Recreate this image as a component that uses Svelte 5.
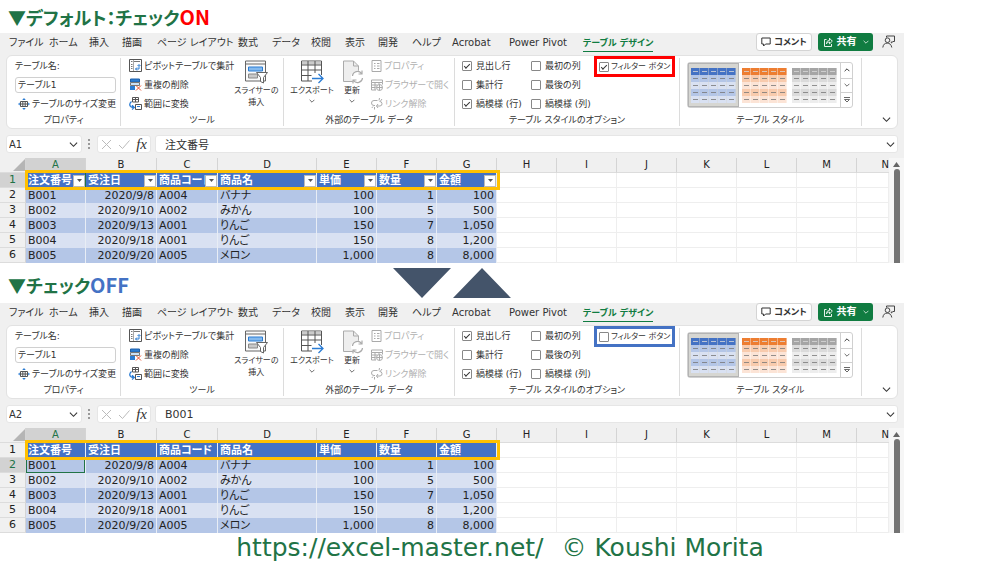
<script lang="ts">
  interface Book {
    id: string;
    title: string;
    state: string;
    tone: string;
    filter: boolean;
    cell: string;
    formula: string;
    activeRow: number;
  }

  const books: Book[] = $state([
    { id: 'on', title: '▼デフォルト：チェック', state: 'ON', tone: 'red', filter: true, cell: 'A1', formula: '注文番号', activeRow: 1 },
    { id: 'off', title: '▼チェック', state: 'OFF', tone: 'blue', filter: false, cell: 'A2', formula: 'B001', activeRow: 2 },
  ]);

  const tabs = [
    'ファイル', 'ホーム', '挿入', '描画', 'ページ レイアウト', '数式', 'データ',
    '校閲', '表示', '開発', 'ヘルプ', 'Acrobat', 'Power Pivot', 'テーブル デザイン',
  ];

  const options = [
    { label: '見出し行', checked: true },
    { label: '最初の列', checked: false },
    { label: '集計行', checked: false },
    { label: '最後の列', checked: false },
    { label: '縞模様 (行)', checked: true },
    { label: '縞模様 (列)', checked: false },
  ];

  const styles = [
    { name: '青', head: '#4472c4', dark: '#b4c6e7', light: '#d9e1f2' },
    { name: 'オレンジ', head: '#ed7d31', dark: '#f8cbad', light: '#fce4d6' },
    { name: '灰色', head: '#a5a5a5', dark: '#dbdbdb', light: '#ededed' },
  ];

  const letters = ['A', 'B', 'C', 'D', 'E', 'F', 'G', 'H', 'I', 'J', 'K', 'L', 'M', 'N'];
  const blanks = letters.slice(7);
  const headings = ['注文番号', '受注日', '商品コード', '商品名', '単価', '数量', '金額'];
  const rows = [
    ['B001', '2020/9/8', 'A004', 'バナナ', '100', '1', '100'],
    ['B002', '2020/9/10', 'A002', 'みかん', '100', '5', '500'],
    ['B003', '2020/9/13', 'A001', 'りんご', '150', '7', '1,050'],
    ['B004', '2020/9/18', 'A001', 'りんご', '150', '8', '1,200'],
    ['B005', '2020/9/20', 'A005', 'メロン', '1,000', '8', '8,000'],
  ];
  const numeric = [1, 4, 5, 6];
</script>

{#snippet chevron(size: number)}
  <svg width={size} height={size} viewBox="0 0 10 10" fill="none" stroke="currentColor" stroke-width="1.2" aria-hidden="true">
    <path d="M1 3l4 4 4-4" />
  </svg>
{/snippet}

<main class="page">
  {#each books as book, i}
    <header class="heading" class:second={i === 1}>
      <h2>{book.title}<span class={book.tone}>{book.state}</span></h2>
      {#if i === 1}
        <svg class="arrows" width="118" height="30" viewBox="0 0 118 30" aria-hidden="true">
          <path d="M0 0h58L29 30zM60 30h58L89 0z" fill="#44546a" />
        </svg>
      {/if}
    </header>

    <section class="book">
      <div class="tabbar">
        <nav class="tabs">
          {#each tabs as tab, t}
            <a href="#{book.id}" class:active={t === tabs.length - 1}>{tab}</a>
          {/each}
        </nav>
        <button class="comment">
          <svg width="10" height="10" viewBox="0 0 10 10" fill="none" stroke="#333" aria-hidden="true">
            <path d="M.8 1h8.4v6H4.6L2.6 9V7H.8z" />
          </svg>
          コメント
        </button>
        <button class="share">
          <svg width="10" height="10" viewBox="0 0 10 10" fill="none" stroke="#fff" aria-hidden="true">
            <path d="M3.5 2.5h-2v7h7V7M3.5 6.8c0-2.2 1-3.4 3-3.4V1.2l2.8 3-2.8 2.6V5C5 5 4 5.6 3.5 6.8z" stroke-width=".9" />
          </svg>
          共有
          <span class="split">{@render chevron(6)}</span>
        </button>
        <button class="person" aria-label="ユーザー">
          <svg width="13" height="13" viewBox="0 0 13 13" fill="none" stroke="#444" aria-hidden="true">
            <path d="M4.5 2.5V1h8v5.500h-1.500L9.300 8V6.500" />
            <circle cx="5.500" cy="5.200" r="2.300" />
            <path d="M.8 12.500c.4-3 2-4.400 4.400-4.400s4 1.400 4.600 4.400" />
          </svg>
        </button>
      </div>

      <div class="ribbon">
        <div class="group props">
          <div class="body stack">
            <label for="name-{book.id}">テーブル名:</label>
            <input id="name-{book.id}" class="name" type="text" value="テーブル1" />
            <button class="tool resize">
              <svg width="12" height="12" viewBox="0 0 12 12" fill="none" aria-hidden="true">
                <path d="M2.500 3.500h7v5h-7zM2.500 6h7M4.800 3.500v5M7.200 3.500v5" stroke="#555" />
                <path d="M6 0l1.800 2H4.200zM6 12l1.800-2H4.200zM0 6l1.800-1.500v3zM12 6l-1.800-1.500v3z" fill="#2b7cd3" />
              </svg>
              テーブルのサイズ変更
            </button>
          </div>
          <p>プロパティ</p>
        </div>

        <div class="group tools">
          <div class="body">
            <div class="stack">
              <button class="tool">
                <svg width="13" height="13" viewBox="0 0 13 13" fill="none" aria-hidden="true">
                  <path d="M.5 .5h12v12H.5z" stroke="#555" />
                  <path d="M2 2.500h1.500M2 5.500h1.500M2 7.500h1.500M2 9.500h1.500M5 2.500h6" stroke="#777" />
                  <path d="M4.500 1v11" stroke="#aaa" />
                  <path d="M6.500 10h3.500V6M8 8.500L6.500 10 8 11.500M8.500 7L10 5.500 11.500 7" stroke="#2b7cd3" />
                </svg>
                ピボットテーブルで集計
              </button>
              <button class="tool">
                <svg width="13" height="13" viewBox="0 0 13 13" fill="none" aria-hidden="true">
                  <path d="M1.500 1h9v3h-9z" fill="#2b7cd3" stroke="#1e5fa8" />
                  <path d="M1.500 4.500h9v3h-9z" fill="#c9e0f7" stroke="#777" />
                  <path d="M1 8h5v4H1z" fill="#2b7cd3" />
                  <path d="M7 7.500l5 5M12 7.500l-5 5" stroke="#e8502e" />
                </svg>
                重複の削除
              </button>
              <button class="tool">
                <svg width="13" height="13" viewBox="0 0 13 13" fill="none" aria-hidden="true">
                  <path d="M3.500 .5h6v4.500h-6zM3.500 2.500h6M6.500 .5v4.500M6.500 7.500h6v5h-6z" stroke="#555" />
                  <path d="M8 9.500h3" stroke="#2b7cd3" />
                  <path d="M2.500 4.500C-.5 7 .5 10.500 5 10.500M3 8.200L5.300 10.500 3 12.500" stroke="#2b7cd3" stroke-width="1.300" />
                </svg>
                範囲に変換
              </button>
            </div>
            <button class="big slicer">
              <svg width="24" height="24" viewBox="0 0 24 24" fill="none" aria-hidden="true">
                <path d="M1.500 1h20v20h-20z" fill="#fafafa" stroke="#666" />
                <path d="M2 4h19" stroke="#666" />
                <path d="M4.500 7h14v4h-14z" fill="#83b9ee" stroke="#2b7cd3" />
                <path d="M4.500 14h9v4h-9z" fill="#c8c8c8" stroke="#888" />
                <path d="M12.500 12.500h11l-4 5V23l-3-1.500v-4z" fill="#fff" stroke="#666" />
              </svg>
              <span>スライサーの<br />挿入</span>
            </button>
          </div>
          <p>ツール</p>
        </div>

        <div class="group external">
          <div class="body">
            <button class="big export">
              <svg width="24" height="24" viewBox="0 0 24 24" fill="none" aria-hidden="true">
                <path d="M1.500 1h20v20h-20z" fill="#fff" stroke="#555" />
                <path d="M2 1.500h19v3H2z" fill="#ccc" />
                <path d="M1.500 5h20M1.500 10h20M1.500 15.500h10M8 1v20M15 1v12" stroke="#555" />
                <path d="M12 15h12v8H12z" fill="#fff" />
                <path d="M12 18.500h11M18.500 14l4.500 4.500-4.500 4.500" stroke="#2b7cd3" stroke-width="1.300" />
              </svg>
              <span>エクスポート</span>
              {@render chevron(6)}
            </button>
            <button class="big refresh">
              <svg width="24" height="24" viewBox="0 0 24 24" fill="none" aria-hidden="true">
                <path d="M3.500 1h10l5 5v15.500h-15z" fill="#eee" stroke="#aaa" />
                <path d="M13.500 1v5h5" stroke="#aaa" />
                <circle cx="17.500" cy="17" r="6.500" fill="#fff" />
                <path d="M12.500 16a5 5 0 0 1 9-2.500M22.500 18a5 5 0 0 1-9 2.500M22 10.500v3.500h-3.500M13 23.500V20h3.500" stroke="#aaa" stroke-width="1.200" />
              </svg>
              <span>更新</span>
              {@render chevron(6)}
            </button>
            <div class="stack">
              <button class="tool" disabled>
                <svg width="11" height="12" viewBox="0 0 11 12" fill="none" stroke="#aaa" aria-hidden="true">
                  <path d="M1 .5h9v11H1zM3 3.500h1.500M6 3.500h2.500M3 6h1.500M6 6h2.500M3 8.500h1.500M6 8.500h2.500" />
                </svg>
                プロパティ
              </button>
              <button class="tool" disabled>
                <svg width="12" height="12" viewBox="0 0 12 12" fill="none" stroke="#aaa" aria-hidden="true">
                  <path d="M.5 1h11v2.500H.5zM.5 3.500v7.500H5M.5 6h6M.5 8.500h4M4 3.500V11M8 3.500v2M11.500 3.500v2" />
                  <circle cx="8.500" cy="8.500" r="3" />
                  <path d="M5.500 8.500h6M8.500 5.500v6" />
                </svg>
                ブラウザーで開く
              </button>
              <button class="tool" disabled>
                <svg width="12" height="12" viewBox="0 0 12 12" fill="none" stroke="#aaa" aria-hidden="true">
                  <path d="M4 7.500H3a2.500 2.500 0 0 1 0-5h3.500M8.500 3.500a2.200 2.200 0 0 1 .5 4.500H5.500M8 2.500L8.500 0M9.500 3l1.500-2M7 6L5.500 8 7 10M3.500 9v2.500M2 8.500L.8 10" />
                </svg>
                リンク解除
              </button>
            </div>
          </div>
          <p>外部のテーブル データ</p>
        </div>

        <div class="group options">
          <div class="body">
            <div class="checks">
              {#each options as option}
                <label class="check"><input type="checkbox" checked={option.checked} />{option.label}</label>
              {/each}
            </div>
            <label class="check marked {book.tone}"><input type="checkbox" bind:checked={book.filter} />フィルター ボタン</label>
          </div>
          <p>テーブル スタイルのオプション</p>
        </div>

        <div class="group gallery-group">
          <div class="body">
            <div class="gallery">
              {#each styles as style, s}
                <button class="thumb" class:selected={s === 0} aria-label={style.name}>
                  <svg width="45" height="35" viewBox="0 0 45 35" aria-hidden="true">
                    {#each [0, 1, 2, 3, 4] as r}
                      {#each [0, 1, 2, 3, 4] as c}
                        <rect x={c * 9} y={r * 7} width="8.600" height="7" fill={r === 0 ? style.head : r % 2 ? style.dark : style.light} />
                        <path d="M{c * 9 + 2} {r * 7 + 3.5}h5" stroke={r === 0 ? '#d8d8d8' : '#777'} stroke-width=".8" />
                      {/each}
                    {/each}
                  </svg>
                </button>
              {/each}
              <div class="spin">
                <button aria-label="上へ"><svg width="6" height="6" viewBox="0 0 10 10" fill="none" stroke="#333" stroke-width="1.600"><path d="M1 7l4-4 4 4" /></svg></button>
                <button aria-label="下へ">{@render chevron(6)}</button>
                <button aria-label="その他"><svg width="8" height="8" viewBox="0 0 8 8" fill="none" stroke="#444"><path d="M1 1.500h6M1.500 3.500h5L4 6z" stroke-width=".8" /></svg></button>
              </div>
            </div>
          </div>
          <p>テーブル スタイル</p>
        </div>
        <button class="collapse" aria-label="リボンを折りたたむ">{@render chevron(9)}</button>
      </div>

      <div class="formula">
        <div class="namebox">
          <input type="text" aria-label="名前ボックス" value={book.cell} />
          {@render chevron(9)}
        </div>
        <svg class="dots" width="4" height="10" viewBox="0 0 4 10" fill="#999" aria-hidden="true">
          <path d="M1 0h2v2H1zM1 4h2v2H1zM1 8h2v2H1z" />
        </svg>
        <div class="fx">
          <button aria-label="キャンセル"><svg width="11" height="11" viewBox="0 0 11 11" fill="none" stroke="#bbb"><path d="M1 1l9 9M10 1l-9 9" /></svg></button>
          <button aria-label="入力"><svg width="12" height="11" viewBox="0 0 12 11" fill="none" stroke="#bbb"><path d="M1 6l3.500 3.500L11.500 1.500" /></svg></button>
          <button class="fn">fx</button>
        </div>
        <div class="formula-text">
          <input type="text" aria-label="数式バー" value={book.formula} />
          {@render chevron(9)}
        </div>
      </div>

      <div class="sheet">
        <div class="grid">
          <table>
            <colgroup>
              <col class="c-num" /><col class="c-std" /><col class="c-date" /><col class="c-code" /><col class="c-name" />
              {#each letters.slice(4, 13) as l (l)}<col class="c-std" />{/each}
              <col />
            </colgroup>
            <thead>
              <tr>
                <th class="corner"><svg width="12" height="12" viewBox="0 0 12 12" aria-hidden="true"><path d="M12 0v12H0z" fill="#b5b5b5" /></svg></th>
                {#each letters as l}<th scope="col" class:current={l === 'A'}>{l}</th>{/each}
              </tr>
            </thead>
            <tbody>
              <tr class="titles">
                <th scope="row" class:current={book.activeRow === 1}>1</th>
                {#each headings as h, c}
                  <td class:edge={book.activeRow === 1 && c === 0}>
                    <div class="cell">
                      <span>{h}</span>
                      {#if book.filter}
                        <button class="drop" aria-label="{h} フィルター"><svg width="5" height="3" viewBox="0 0 5 3"><path d="M0 0h5L2.500 3z" fill="#555" /></svg></button>
                      {/if}
                    </div>
                  </td>
                {/each}
                {#each blanks as b (b)}<td class="blank"></td>{/each}
              </tr>
              {#each rows as row, r}
                <tr class:band={r % 2 === 0}>
                  <th scope="row" class:current={book.activeRow === r + 2}>{r + 2}</th>
                  {#each row as value, c}
                    <td class:num={numeric.includes(c)} class:picked={book.activeRow === r + 2 && c === 0}>{value}</td>
                  {/each}
                  {#each blanks as b (b)}<td class="blank"></td>{/each}
                </tr>
              {/each}
            </tbody>
          </table>
          <div class="frame"></div>
        </div>
        <div class="scroll">
          <svg width="7" height="5" viewBox="0 0 7 5" aria-hidden="true"><path d="M3.500 0L7 5H0z" fill="#666" /></svg>
          <div class="bar"></div>
        </div>
      </div>
    </section>
  {/each}

  <footer><a href="https://excel-master.net/">https://excel-master.net/</a><span>© Koushi Morita</span></footer>
</main>

<style>
  :global(body) {
    margin: 0;
    background: #fff;
  }

  .page {
    font-family: "DejaVu Sans", "Noto Sans CJK JP", sans-serif;
    font-feature-settings: "palt";
    font-size: 9px;
    line-height: 12px;
    color: #333;
    overflow: hidden;
  }

  button,
  input {
    font: inherit;
    font-feature-settings: inherit;
    color: inherit;
    margin: 0;
    padding: 0;
    border: 0;
    background: none;
    box-sizing: border-box;
  }

  svg {
    display: block;
    flex: none;
  }

  p {
    margin: 0;
  }

  .heading {
    display: grid;
    grid-template-columns: 1fr auto 1fr;
    align-items: center;
    height: 33px;
    margin-right: 96px;
  }

  .heading.second {
    height: 40px;
  }

  .second h2 {
    padding-top: 4px;
  }

  h2 {
    margin: 0;
    padding-left: 8px;
    font-family: "Noto Sans CJK JP", sans-serif;
    font-size: 18px;
    line-height: 28px;
    font-weight: 700;
    color: #217346;
    white-space: nowrap;
  }

  h2 span {
    font-size: 20px;
  }

  h2 .red {
    color: #f00;
  }

  h2 .blue {
    color: #4472c4;
  }

  .book {
    margin-right: 96px;
    background: #f0f0f0;
  }

  .tabbar {
    display: flex;
    align-items: flex-start;
    height: 22px;
    padding: 0 9px;
  }

  .tabs {
    flex: 1;
    display: grid;
    grid-template-columns: 40px 40px 33px 35px 81px 34px 39px 34px 33px 34px 40px 57px 74px auto;
    justify-content: start;
    padding-top: 2px;
    font-size: 10px;
    line-height: 16px;
    white-space: nowrap;
  }

  .tabs a {
    color: #333;
    text-decoration: none;
  }

  .tabs .active {
    color: #107c41;
    font-size: 9px;
    font-weight: 700;
    border-bottom: 1px solid #107c41;
  }

  .comment,
  .share {
    display: flex;
    align-items: center;
    gap: 3px;
    height: 18px;
    border-radius: 3px;
    font-weight: 700;
    white-space: nowrap;
  }

  .comment {
    justify-content: center;
    width: 56px;
    margin-right: 6px;
    background: #fff;
    border: 1px solid #d4d4d4;
  }

  .share {
    justify-content: space-between;
    width: 55px;
    margin-right: 9px;
    padding: 0 4px 0 5px;
    background: #107c41;
    color: #fff;
    font-size: 10px;
  }

  .split {
    padding-left: 3px;
  }

  .person {
    padding-top: 2px;
  }

  .ribbon {
    display: flex;
    height: 74px;
    margin: 0 6px;
    box-sizing: border-box;
    background: #fff;
    border: 1px solid #e2e2e2;
    border-radius: 6px;
  }

  .group {
    display: flex;
    flex-direction: column;
    flex: none;
    box-sizing: border-box;
    margin: 2px 0;
    border-right: 1px solid #dcdcdc;
    white-space: nowrap;
  }

  .group p {
    line-height: 12px;
    text-align: center;
  }

  .props {
    width: 114px;
  }

  .tools {
    width: 163px;
  }

  .external {
    width: 171px;
  }

  .options {
    width: 225px;
  }

  .gallery-group {
    width: 182px;
  }

  .body {
    display: flex;
    height: 59px;
    margin-top: -2px;
  }

  .stack {
    display: grid;
    grid-template-rows: repeat(3, 19px);
    align-items: center;
    justify-items: start;
  }

  .props .stack {
    padding: 0 5px 0 8px;
  }

  .name {
    width: 100%;
    height: 16px;
    padding: 0 2px;
    border: 1px solid #d0d0d0;
    border-radius: 3px;
  }

  .tool {
    display: flex;
    align-items: center;
    gap: 2px;
    height: 16px;
  }

  .tool:disabled {
    color: #b0b0b0;
  }

  .resize {
    padding-left: 3px;
  }

  .tools .body {
    padding-left: 8px;
    justify-content: space-between;
  }

  .big {
    display: flex;
    flex-direction: column;
    align-items: center;
    justify-content: flex-start;
    gap: 1px;
    padding-top: 4px;
    font-size: 8px;
    text-align: center;
  }

  .slicer {
    padding-right: 5px;
  }

  .export {
    width: 56px;
  }

  .refresh {
    width: 24px;
    margin-right: 7px;
  }

  .options .body {
    align-items: flex-start;
    padding-left: 7px;
  }

  .checks {
    display: grid;
    grid-template-columns: 69px 63px;
    grid-template-rows: repeat(3, 19px);
    align-items: center;
  }

  .check {
    display: flex;
    align-items: center;
    gap: 4px;
  }

  .check input {
    appearance: none;
    flex: none;
    width: 10px;
    height: 10px;
    border: 1px solid #888;
    border-radius: 1px;
    background: #fff;
    display: grid;
    place-items: center;
  }

  .check input:checked::before {
    content: '';
    width: 5px;
    height: 2px;
    border-left: 1px solid #333;
    border-bottom: 1px solid #333;
    transform: rotate(-45deg);
  }

  .marked {
    box-sizing: border-box;
    width: 81px;
    height: 21px;
    padding-left: 2px;
    gap: 2px;
    font-size: 8px;
    border: 3px solid #f00;
  }

  .marked.blue {
    border-color: #4472c4;
  }

  .gallery-group .body {
    align-items: flex-start;
    padding: 6px 8px 0 7px;
    box-sizing: border-box;
  }

  .gallery {
    display: flex;
    flex: 1;
    height: 46px;
    box-sizing: border-box;
    border: 1px solid #d0d0d0;
    border-radius: 3px;
  }

  .thumb {
    flex: 1;
    display: grid;
    place-items: center;
  }

  .thumb.selected {
    background: #d6d6d2;
    box-shadow: inset 0 0 0 1px #b4b4b4;
  }

  .spin {
    display: grid;
    grid-template-rows: repeat(3, 1fr);
    width: 12px;
  }

  .spin button {
    display: grid;
    place-items: center;
    border-left: 1px solid #d0d0d0;
  }

  .spin button + button {
    border-top: 1px solid #d0d0d0;
  }

  .collapse {
    margin: auto 6px 4px auto;
  }

  .formula {
    display: flex;
    height: 18px;
    margin: 6px 6px 5px;
    font-size: 11px;
  }

  .namebox,
  .fx,
  .formula-text {
    display: flex;
    align-items: center;
    box-sizing: border-box;
    background: #fff;
    border: 1px solid #e6e6e6;
    border-radius: 3px;
  }

  .namebox {
    width: 76px;
    padding: 0 3px 0 2px;
  }

  .namebox input,
  .formula-text input {
    flex: 1;
    min-width: 0;
    height: 16px;
  }

  .namebox input {
    font-size: 10px;
  }

  .dots {
    margin: auto 6px auto 5px;
  }

  .fx {
    width: 54px;
    margin-right: 4px;
    padding: 0 3px;
    justify-content: space-between;
  }

  .fn {
    font-family: "Liberation Serif", serif;
    font-style: italic;
    font-size: 15px;
    line-height: 14px;
  }

  .formula-text {
    flex: 1;
    padding: 0 2px 0 9px;
  }

  .sheet {
    display: flex;
  }

  .grid {
    position: relative;
    flex: 1;
    min-width: 0;
  }

  table {
    width: 100%;
    table-layout: fixed;
    border-collapse: separate;
    border-spacing: 0;
    font-size: 11px;
    line-height: 14px;
    color: #222;
  }

  .c-num {
    width: 26px;
  }

  .c-std {
    width: 60px;
  }

  .c-date {
    width: 71px;
  }

  .c-code {
    width: 61px;
  }

  .c-name {
    width: 99px;
  }

  th,
  td {
    box-sizing: border-box;
    height: 15px;
    padding: 0 2px;
    border-right: 1px solid #e8edf5;
    overflow: hidden;
    white-space: nowrap;
  }

  th {
    padding: 0;
    font-weight: 400;
    background: #f0f0f0;
    border-right-color: #d4d4d4;
    border-bottom: 1px solid #dcdcdc;
  }

  thead th {
    font-size: 10px;
  }

  thead th:last-child {
    text-align: right;
    border-right: 0;
  }

  th.current {
    background: #d2d2d2;
    color: #217346;
  }

  .corner svg {
    margin-left: auto;
  }

  td {
    background: #d9e1f2;
  }

  .band td {
    background: #b4c6e7;
  }

  .num {
    text-align: right;
  }

  .titles td {
    background: #4472c4;
    color: #fff;
    font-weight: 700;
    padding-right: 0;
  }

  .titles td.edge {
    border-right: 1px solid #217346;
  }

  .cell {
    display: flex;
    align-items: center;
    height: 15px;
  }

  .cell span {
    flex: 1;
    min-width: 0;
  }

  .drop {
    flex: none;
    display: grid;
    place-items: center;
    position: relative;
    width: 12px;
    height: 12px;
    background: #fff;
    border: 1px solid #bbb;
  }

  td.picked {
    box-shadow: inset 0 0 0 1px #217346;
  }

  tr td.blank {
    background: #fff;
    border-right: 1px solid #eee;
    border-bottom: 1px solid #eee;
  }

  /* highlight drawn around the header row of the table */
  .frame {
    position: absolute;
    top: 12px;
    left: 25px;
    width: 475px;
    height: 20px;
    box-sizing: border-box;
    border: 3px solid #ffc000;
    pointer-events: none;
  }

  .scroll {
    display: flex;
    flex-direction: column;
    align-items: center;
    gap: 2px;
    width: 15px;
    padding-top: 4px;
    box-sizing: border-box;
    background: #f6f6f6;
  }

  .bar {
    flex: 1;
    width: 6px;
    border-radius: 3px 3px 0 0;
    background: #737373;
  }

  footer {
    display: flex;
    justify-content: center;
    gap: 18px;
    font-size: 25px;
    line-height: 29px;
    color: #217346;
    white-space: nowrap;
  }

  footer a {
    color: inherit;
    text-decoration: none;
  }
</style>
